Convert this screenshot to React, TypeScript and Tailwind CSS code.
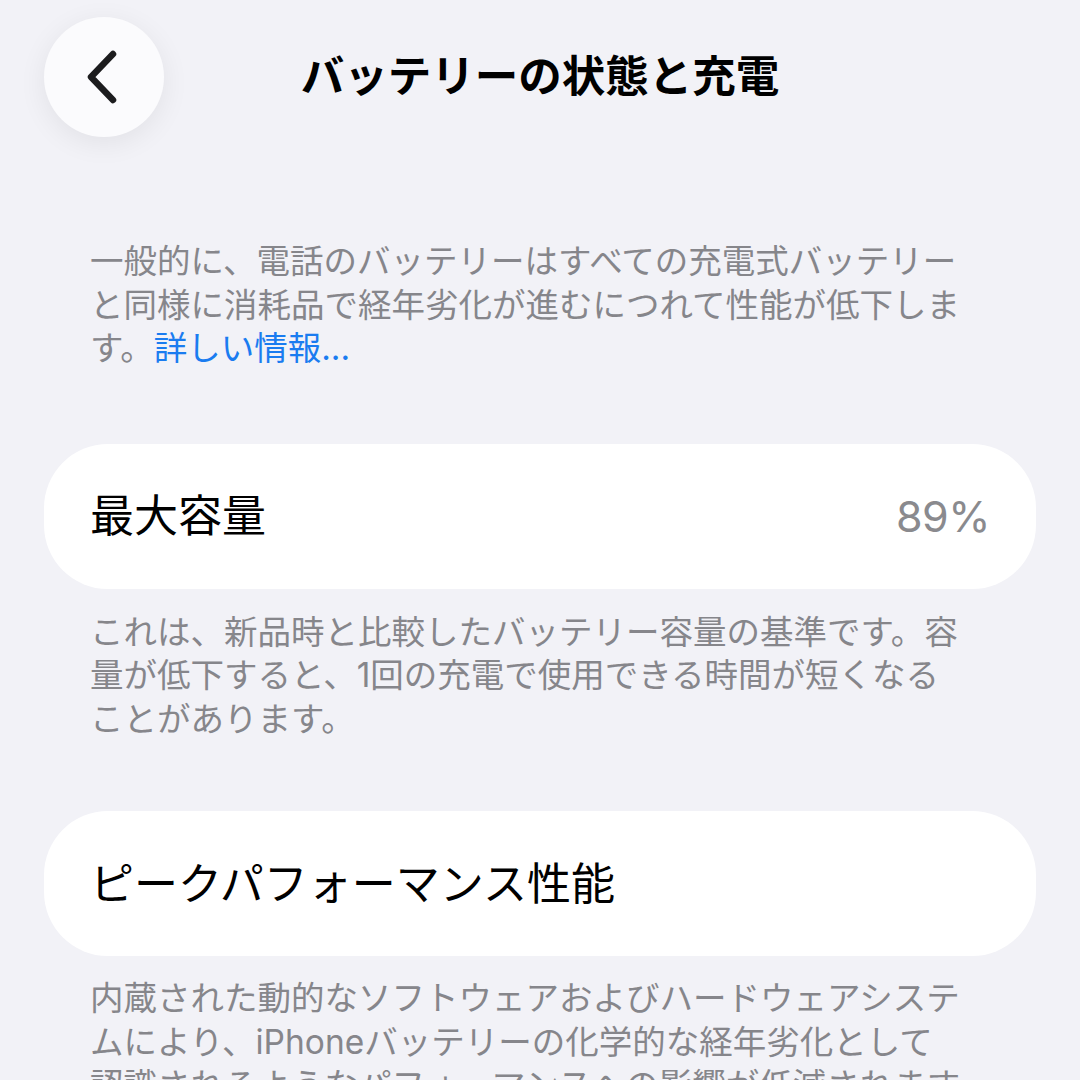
const FONT = "font-['Inter','Noto_Sans_CJK_JP',sans-serif]";

function BackButton() {
  return (
    <button
      type="button"
      aria-label="戻る"
      className="flex h-[120px] w-[120px] items-center justify-center rounded-full bg-[#fbfbfd] shadow-[0_6px_28px_rgba(0,0,0,0.07)]"
    >
      <svg width="40" height="60" viewBox="0 0 40 60" fill="none">
        <path d="M29 7 L7 30 L29 53" stroke="#1c1c1e" strokeWidth="6.5" strokeLinecap="round" strokeLinejoin="round" />
      </svg>
    </button>
  );
}

function Note({ lines }: { lines: React.ReactNode[] }) {
  return (
    <div className="px-[46px] text-[33.5px] leading-[43.5px] text-[#86868b]">
      {lines.map((l, i) => (
        <p key={i} className="whitespace-nowrap">
          {l}
        </p>
      ))}
    </div>
  );
}

function Row({ label, value }: { label: string; value?: string }) {
  return (
    <div className="flex h-[145px] items-center justify-between rounded-[64px] bg-white px-[46px]">
      <span className="text-[44px] text-black">{label}</span>
      {value && <span className="text-[43px] tracking-[-0.5px] text-[#8a8a8e]">{value}</span>}
    </div>
  );
}

export default function App() {
  return (
    <div className={`h-[1080px] w-[1080px] overflow-hidden bg-[#f2f2f7] ${FONT}`}>
      <div className="grid grid-cols-[120px_1fr_120px] items-center px-[44px] pt-[17px]">
        <BackButton />
        <h1 className="text-center text-[43.5px] font-bold text-black">バッテリーの状態と充電</h1>
        <div />
      </div>

      <div className="flex flex-col px-[44px] pt-[103px]">
        <Note
          lines={[
            '一般的に、電話のバッテリーはすべての充電式バッテリー',
            'と同様に消耗品で経年劣化が進むにつれて性能が低下しま',
            <>
              す。<span className="text-[#1a7cf0]">詳しい情報...</span>
            </>,
          ]}
        />

        <div className="mt-[73px]">
          <Row label="最大容量" value="89%" />
        </div>

        <div className="mt-[22px]">
          <Note
            lines={[
              'これは、新品時と比較したバッテリー容量の基準です。容',
              '量が低下すると、1回の充電で使用できる時間が短くなる',
              'ことがあります。',
            ]}
          />
        </div>

        <div className="mt-[70px]">
          <Row label="ピークパフォーマンス性能" />
        </div>

        <div className="mt-[21px]">
          <Note
            lines={[
              '内蔵された動的なソフトウェアおよびハードウェアシステ',
              'ムにより、iPhoneバッテリーの化学的な経年劣化として',
              '認識されるようなパフォーマンスへの影響が低減されます',
            ]}
          />
        </div>
      </div>
    </div>
  );
}
